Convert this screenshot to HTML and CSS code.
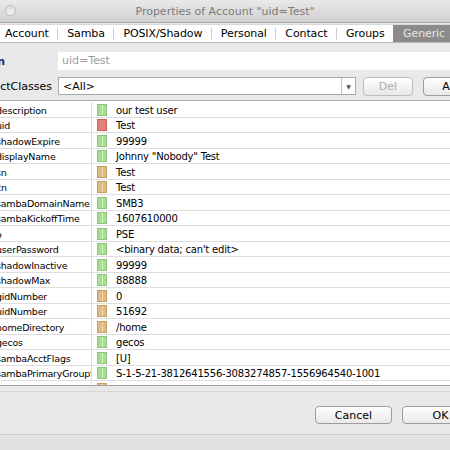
FILE: index.html
```html
<!DOCTYPE html>
<html>
<head>
  <title>Properties of Account</title>
  <link rel="stylesheet" href="styles.css">
</head>
<body>
<div class="window">
  <!-- Title bar -->
  <div class="titlebar">
    <span class="light"></span>
    <span class="title">Properties of Account "uid=Test"</span>
  </div>

  <!-- Tabs -->
  <div class="tabs">
    <span class="tab">Account</span>
    <span class="tab">Samba</span>
    <span class="tab">POSIX/Shadow</span>
    <span class="tab">Personal</span>
    <span class="tab">Contact</span>
    <span class="tab">Groups</span>
    <span class="tab active">Generic</span>
  </div>

  <!-- dn + objectClasses -->
  <div class="form">
    <div class="form-row">
      <label class="form-label dn-label"><span>dn</span></label>
      <div class="dn-field">uid=Test</div>
    </div>
    <div class="form-row">
      <label class="form-label"><span>objectClasses</span></label>
      <div class="combo">
        <span class="combo-text">&lt;All&gt;</span>
        <span class="combo-arrow">&#9660;</span>
      </div>
      <button type="button" class="btn del-button" disabled>Del</button>
      <button type="button" class="btn add-button">Add</button>
    </div>
  </div>

  <!-- Attribute table -->
  <div class="table">
    <div class="row"><div class="name">description</div><div class="value"><span class="swatch green"></span>our test user</div></div>
    <div class="row"><div class="name">uid</div><div class="value"><span class="swatch red"></span>Test</div></div>
    <div class="row"><div class="name">shadowExpire</div><div class="value"><span class="swatch green"></span>99999</div></div>
    <div class="row"><div class="name">displayName</div><div class="value"><span class="swatch green"></span>Johnny "Nobody" Test</div></div>
    <div class="row"><div class="name">sn</div><div class="value"><span class="swatch tan"></span>Test</div></div>
    <div class="row"><div class="name">cn</div><div class="value"><span class="swatch tan"></span>Test</div></div>
    <div class="row"><div class="name">sambaDomainName</div><div class="value"><span class="swatch green"></span>SMB3</div></div>
    <div class="row"><div class="name">sambaKickoffTime</div><div class="value"><span class="swatch green"></span>1607610000</div></div>
    <div class="row"><div class="name">o</div><div class="value"><span class="swatch green"></span>PSE</div></div>
    <div class="row"><div class="name">userPassword</div><div class="value"><span class="swatch green"></span>&lt;binary data; can't edit&gt;</div></div>
    <div class="row"><div class="name">shadowInactive</div><div class="value"><span class="swatch green"></span>99999</div></div>
    <div class="row"><div class="name">shadowMax</div><div class="value"><span class="swatch green"></span>88888</div></div>
    <div class="row"><div class="name">gidNumber</div><div class="value"><span class="swatch tan"></span>0</div></div>
    <div class="row"><div class="name">uidNumber</div><div class="value"><span class="swatch tan"></span>51692</div></div>
    <div class="row"><div class="name">homeDirectory</div><div class="value"><span class="swatch tan"></span>/home</div></div>
    <div class="row"><div class="name">gecos</div><div class="value"><span class="swatch green"></span>gecos</div></div>
    <div class="row"><div class="name">sambaAcctFlags</div><div class="value"><span class="swatch green"></span>[U]</div></div>
    <div class="row"><div class="name">sambaPrimaryGroupSID</div><div class="value"><span class="swatch green"></span>S-1-5-21-3812641556-3083274857-1556964540-1001</div></div>
    <div class="row"><div class="name">loginShell</div><div class="value"><span class="swatch tan"></span>/bin/bash</div></div>
  </div>

  <!-- Buttons -->
  <div class="footer">
    <button type="button" class="btn footer-button">Cancel</button>
    <button type="button" class="btn footer-button">OK</button>
  </div>
</div>
</body>
</html>
```

FILE: styles.css
```css
* {
  box-sizing: border-box;
}

body {
  margin: 0;
  width: 450px;
  height: 450px;
  overflow: hidden;
  background-color: #e2e2e2;
  font-family: "DejaVu Sans", sans-serif;
  font-size: 11px;
  color: #000;
}

.window {
  background-color: #e9e9e9;
}

/* Title bar */
.titlebar {
  position: relative;
  height: 23px;
  display: flex;
  align-items: center;
  justify-content: center;
  background: linear-gradient(#e9e9e9, #d1d1d1);
  border-bottom: 1px solid #a9a9a9;
}

.title {
  color: #7b7b7b;
  font-size: 11px;
}

.light {
  position: absolute;
  left: 5px;
  top: 5px;
  width: 11px;
  height: 11px;
  border-radius: 50%;
  border: 1px solid #bcbcbc;
  background: linear-gradient(#dedede, #f2f2f2);
}

/* Tabs */
.tabs {
  display: flex;
  height: 19px;
  margin-top: 1px;
  margin-left: -5px;
  background-color: #fff;
  border-top: 1px solid #d8d8d8;
  border-bottom: 1px solid #b4b4b4;
  letter-spacing: -0.1px;
}

.tab {
  display: flex;
  align-items: center;
  padding: 0 8.5px 0 10px;
  white-space: nowrap;
  background: linear-gradient(#cdcdcd, #cdcdcd) left center / 1px 12px no-repeat;
}

.tab:first-child {
  background: none;
}

.tab.active {
  flex: 1;
  padding-left: 10px;
  background: #8b8b8b;
  color: #e6e6e6;
}

/* dn / objectClasses */
.form {
  padding-top: 9px;
}

.form-row {
  display: flex;
  align-items: center;
  height: 18px;
  margin-bottom: 7px;
}

.form-row:last-child {
  margin-bottom: 5px;
}

.form-label {
  flex: none;
  width: 52px;
  margin-right: 6px;
  display: flex;
  justify-content: flex-end;
  white-space: nowrap;
}

.dn-label {
  width: 5px;
  margin-right: 53px;
  color: #2c1f5e;
  font-weight: bold;
}

.dn-field {
  flex: 1;
  height: 18px;
  line-height: 18px;
  padding-left: 4px;
  background-color: #fff;
  color: #9d9d9d;
}

.combo {
  flex: none;
  width: 298px;
  height: 18px;
  display: flex;
  align-items: center;
  background-color: #fff;
  border: 1px solid #a8a8a8;
}

.combo-text {
  flex: 1;
  padding-left: 4px;
}

.combo-arrow {
  width: 14px;
  height: 100%;
  display: flex;
  align-items: center;
  justify-content: center;
  border-left: 1px solid #c4c4c4;
  font-size: 6px;
  color: #555;
}

.btn {
  height: 19px;
  padding: 0;
  border: 1px solid #9d9d9d;
  border-radius: 4px;
  background: linear-gradient(#ffffff, #f3f3f3 50%, #e9e9e9);
  font-family: "DejaVu Sans", sans-serif;
  font-size: 11px;
  color: #000;
}

.del-button {
  flex: none;
  width: 50px;
  margin-left: 7px;
  border-color: #bdbdbd;
  color: #a9a9a9;
}

.add-button {
  flex: none;
  width: 60px;
  margin-left: 10px;
}

/* Attribute table */
.table {
  height: 286px;
  overflow: hidden;
  background-color: #fff;
  border-top: 1px solid #ababab;
  border-bottom: 1px solid #a3a3a3;
  padding-top: 1px;
  font-size: 10px;
  letter-spacing: -0.2px;
}

.row {
  display: flex;
  align-items: center;
  height: 15.5px;
  padding-top: 2px;
  border-bottom: 1px solid #dedede;
}

.name {
  flex: none;
  width: 92px;
  margin-top: -2px;
  height: 15px;
  padding-top: 2px;
  line-height: 13px;
  font-size: 9.5px;
  text-indent: -4px;
  overflow: hidden;
  white-space: nowrap;
  border-right: 1px solid #dcdcdc;
}

.value {
  display: flex;
  align-items: center;
  gap: 9px;
  padding-left: 5px;
  white-space: nowrap;
}

.swatch {
  flex: none;
  width: 10px;
  height: 12px;
  margin-top: -1px;
  border: 1px solid;
}

.swatch.green {
  border-color: #8dc47b;
  background: linear-gradient(to right, #a7df91 0 45%, #d6f2c9 45% 60%, #a7df91 60%);
}

.swatch.red {
  border-color: #c9645b;
  background-color: #e27f76;
}

.swatch.tan {
  border-color: #c49d63;
  background: linear-gradient(to right, #dfbb83 0 45%, #efd8b2 45% 60%, #dfbb83 60%);
}

/* Footer */
.footer {
  display: flex;
  justify-content: flex-end;
  gap: 10px;
  height: 44px;
  margin-top: 5px;
  margin-right: -29px;
  padding-top: 14px;
  border-top: 1px solid #d4d4d4;
  border-bottom: 1px solid #cdcdcd;
}

.footer-button {
  width: 77px;
  height: 18px;
}
```
